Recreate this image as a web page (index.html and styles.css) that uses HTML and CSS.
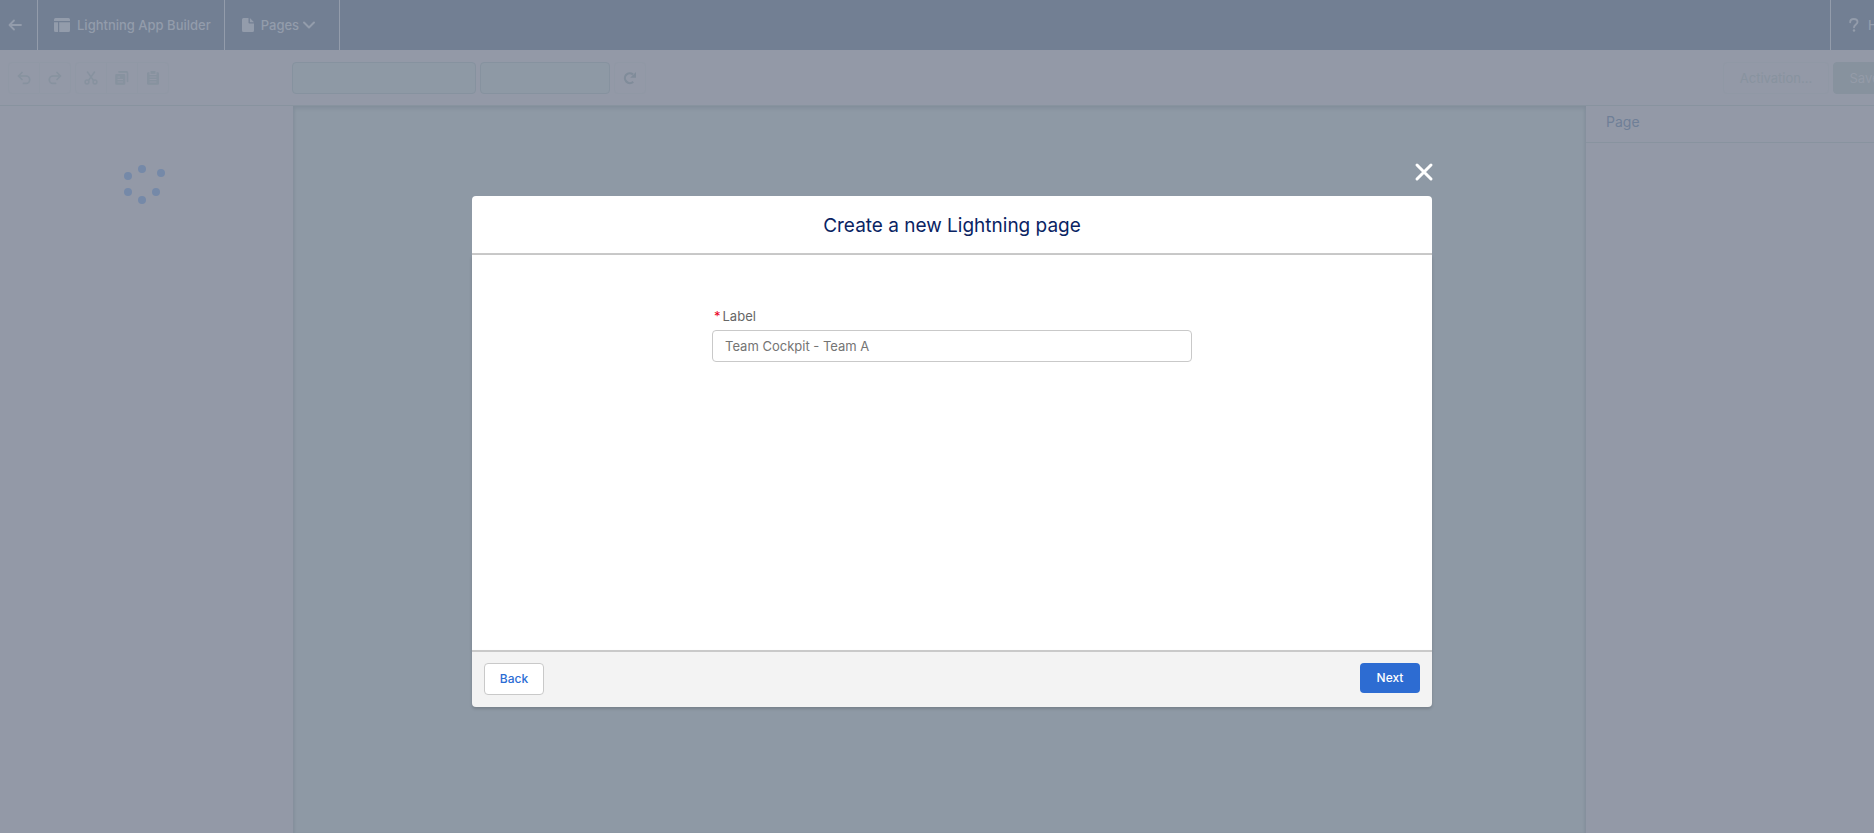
FILE: index.html
```html
<!DOCTYPE html>
<html lang="en">
<head>
  <meta charset="UTF-8">
  <meta name="viewport" content="width=device-width, initial-scale=1.0">
  <title>Lightning App Builder</title>
  <link rel="stylesheet" href="styles.css">
</head>
<body>
  <div class="app">
    <!-- Top navigation -->
    <header class="nav">
      <a class="nav-item nav-back" href="#" aria-label="Back">
        <svg width="14" height="12" viewBox="0 0 14 12"><path d="M13 6H2M6 1.500L1.500 6L6 10.500" fill="none" stroke="currentColor" stroke-width="1.800" stroke-linecap="round" stroke-linejoin="round"/></svg>
      </a>
      <div class="nav-item nav-brand">
        <svg width="16" height="14" viewBox="0 0 16 14" fill="currentColor"><path d="M1.500 0h13A1.500 1.500 0 0 1 16 1.500V3H0V1.500A1.500 1.500 0 0 1 1.500 0zM0 4.200h4V14H1.500A1.500 1.500 0 0 1 0 12.500zM5.200 4.200H16v8.300a1.500 1.500 0 0 1-1.500 1.500H5.200z"/></svg>
        <span>Lightning App Builder</span>
      </div>
      <button class="nav-item nav-pages" type="button">
        <svg width="12" height="14" viewBox="0 0 12 14" fill="currentColor"><path d="M1.500 0H6.500v4.500a1 1 0 0 0 1 1H12v7a1.500 1.500 0 0 1-1.500 1.500h-9A1.500 1.500 0 0 1 0 12.500v-11A1.500 1.500 0 0 1 1.500 0zM7.900 0L12 4.200H7.900z"/></svg>
        <span>Pages</span>
        <svg class="chevron" width="12" height="8" viewBox="0 0 12 8"><path d="M1 1.500L6 6.500L11 1.500" fill="none" stroke="currentColor" stroke-width="2" stroke-linecap="round" stroke-linejoin="round"/></svg>
      </button>
      <a class="nav-item nav-help" href="#">
        <svg width="10" height="14" viewBox="0 0 10 14"><path d="M1.200 4.200C1.200 2.300 2.800 1 4.800 1s3.700 1.200 3.700 3.100C8.500 6.300 5 6.600 5 9.300" fill="none" stroke="currentColor" stroke-width="1.900" stroke-linecap="round"/><circle cx="5" cy="12.500" r="1.200" fill="currentColor"/></svg>
        <span>Help</span>
      </a>
    </header>

    <!-- Toolbar -->
    <div class="toolbar">
      <div class="tools">
        <div class="btn-group">
          <button type="button" disabled aria-label="Undo">
            <svg width="14" height="14" viewBox="0 0 14 14"><path d="M1.500 5H9a3.700 3.700 0 0 1 0 7.400H6.500M5 1.500L1.500 5L5 8.500" fill="none" stroke="currentColor" stroke-width="1.700" stroke-linecap="round" stroke-linejoin="round"/></svg>
          </button>
          <button type="button" disabled aria-label="Redo">
            <svg width="14" height="14" viewBox="0 0 14 14"><path d="M12.500 5H5a3.700 3.700 0 0 0 0 7.400H7.500M9 1.500L12.500 5L9 8.500" fill="none" stroke="currentColor" stroke-width="1.700" stroke-linecap="round" stroke-linejoin="round"/></svg>
          </button>
        </div>
        <div class="btn-group">
          <button type="button" disabled aria-label="Cut">
            <svg width="14" height="14" viewBox="0 0 14 14" fill="none" stroke="currentColor" stroke-width="1.500" stroke-linecap="round"><path d="M3.500 1L9.500 9.500M10.500 1L4.500 9.500"/><circle cx="3" cy="11" r="1.900"/><circle cx="11" cy="11" r="1.900"/></svg>
          </button>
          <button type="button" disabled aria-label="Copy">
            <svg width="14" height="14" viewBox="0 0 14 14" fill="currentColor"><path fill-rule="evenodd" d="M1.500 3h7.500A1.300 1.300 0 0 1 10.300 4.300v8.200A1.300 1.300 0 0 1 9 13.800H1.500A1.300 1.300 0 0 1 .2 12.500V4.300A1.300 1.300 0 0 1 1.500 3zM2.500 5.500v1H5v-1zM2.500 8v1H8V8zM2.500 10.500v1H8v-1z"/><path d="M4 .9h7.500a1 1 0 0 1 1 1v8.500" fill="none" stroke="currentColor" stroke-width="1.600" stroke-linecap="round"/></svg>
          </button>
          <button type="button" disabled aria-label="Paste">
            <svg width="14" height="14" viewBox="0 0 14 14" fill="currentColor"><path d="M4.500 0h5v2.800h-5z"/><path fill-rule="evenodd" d="M2.300 1.300H3.500V4h7V1.300h1.200A1.300 1.300 0 0 1 13 2.600v9.900a1.300 1.300 0 0 1-1.300 1.300H2.300A1.300 1.300 0 0 1 1 12.500V2.600a1.300 1.300 0 0 1 1.300-1.300zM3.500 5.500v1h7v-1zM3.500 8v1h7V8zM3.500 10.500v1h7v-1z"/></svg>
          </button>
        </div>
      </div>
      <div class="view-options">
        <select class="device-select" disabled aria-label="Device"></select>
        <select class="zoom-select" disabled aria-label="Zoom"></select>
        <button class="refresh" type="button" aria-label="Refresh">
          <svg width="14" height="14" viewBox="0 0 14 14"><path d="M10.200 10.700A4.900 4.900 0 1 1 10 3.400" fill="none" stroke="currentColor" stroke-width="2.200"/><path d="M13 1v5.700H7.200z" fill="currentColor"/></svg>
        </button>
      </div>
      <div class="page-actions">
        <button class="activation" type="button" disabled>Activation...</button>
        <button class="save" type="button" disabled>Save</button>
      </div>
    </div>

    <!-- Workspace -->
    <main class="workspace">
      <aside class="components">
        <svg class="spinner" width="46" height="44" viewBox="0 0 46 44" fill="currentColor" role="img" aria-label="Loading">
          <circle cx="22" cy="7" r="4"/>
          <circle cx="41" cy="11" r="4"/>
          <circle cx="8" cy="14" r="4"/>
          <circle cx="8" cy="30" r="4"/>
          <circle cx="36" cy="30" r="4"/>
          <circle cx="22" cy="38" r="4"/>
        </svg>
      </aside>
      <section class="canvas"></section>
      <aside class="properties">
        <h2>Page</h2>
      </aside>
    </main>

    <!-- New page dialog -->
    <div class="overlay">
      <form class="modal" role="dialog" aria-labelledby="modalTitle">
        <button class="modal-close" type="button" aria-label="Close">
          <svg width="18" height="18" viewBox="0 0 18 18"><path d="M3 2L17 16M17 2L3 16" stroke="currentColor" stroke-width="3" stroke-linecap="round"/></svg>
        </button>
        <div class="modal-header">
          <h1 id="modalTitle">Create a new Lightning page</h1>
        </div>
        <div class="modal-content">
          <div class="field">
            <label for="pageLabel"><abbr title="required">*</abbr>Label</label>
            <input type="text" id="pageLabel" value="Team Cockpit - Team A" required>
          </div>
        </div>
        <div class="modal-footer">
          <button class="btn-back" type="button">Back</button>
          <button class="btn-next" type="submit">Next</button>
        </div>
      </form>
    </div>
  </div>
</body>
</html>
```

FILE: styles.css
```css
* {
  box-sizing: border-box;
}

body {
  margin: 0;
  overflow: hidden;
  font-family: Inter, sans-serif;
  font-size: 13px;
  line-height: 20px;
  color: #6f7f97;
}

button,
input,
select {
  font: inherit;
  color: inherit;
  margin: 0;
}

svg {
  display: block;
  flex: none;
  overflow: visible;
}

/* The builder runs a little past the right edge of the window */
.app {
  display: flex;
  flex-direction: column;
  width: calc(100% + 30px);
  height: 100vh;
  background: #9399a7;
}

/* Navigation */
.nav {
  display: flex;
  height: 50px;
  background: #727f93;
  color: #939cab;
  font-weight: 500;
}

.nav-item {
  display: flex;
  align-items: center;
  border: 0;
  border-right: 1px solid #939cab;
  background: none;
  color: inherit;
  text-decoration: none;
}

.nav-back {
  padding: 0 15px 0 8px;
}

.nav-brand {
  gap: 7px;
  padding: 0 13px 0 16px;
}

.nav-pages {
  gap: 7px;
  padding: 0 24px 0 17px;
}

.nav-pages .chevron {
  margin-left: -3px;
}

.nav-help {
  gap: 9px;
  width: 74px;
  margin-left: auto;
  padding-left: 18px;
  border-right: 0;
  border-left: 1px solid #939cab;
}

/* Toolbar */
.toolbar {
  display: flex;
  align-items: center;
  height: 56px;
  padding: 0 8px;
  border-bottom: 1px solid #88939f;
}

.toolbar button {
  display: flex;
  align-items: center;
  justify-content: center;
  height: 32px;
  padding: 0;
  border: 1px solid #9098a5;
  border-radius: 4px;
  background: none;
}

.tools {
  display: flex;
  gap: 4px;
  width: 284px;
}

.btn-group {
  display: flex;
}

.toolbar .btn-group button {
  width: 32px;
  color: #87929f;
  border-radius: 0;
}

.btn-group button + button {
  margin-left: -1px;
}

.toolbar .btn-group button:first-child {
  border-radius: 4px 0 0 4px;
}

.toolbar .btn-group button:last-child {
  border-radius: 0 4px 4px 0;
}

.view-options,
.page-actions {
  display: flex;
  gap: 4px;
}

.view-options select {
  height: 32px;
  appearance: none;
  border: 1px solid #86929f;
  border-radius: 4px;
  background: #8e99a5;
  opacity: 1;
}

.device-select {
  width: 184px;
}

.zoom-select {
  width: 130px;
}

.toolbar .refresh {
  width: 32px;
  color: #808c9a;
}

.page-actions {
  margin-left: auto;
}

.toolbar .activation {
  width: 106px;
  color: #88939f;
}

.toolbar .save {
  width: 63px;
  border-color: #87929e;
  background: #87929e;
  color: #949ba8;
}

/* Workspace */
.workspace {
  display: flex;
  flex: 1;
}

.components {
  width: 293px;
  padding: 56px 120px;
}

.spinner {
  color: #7589a8;
}

.canvas {
  flex: 1;
  background: #8e99a5;
  box-shadow: inset 0 5px 4px -3px #818c99, inset 3px 0 2px -1px #86919e, inset -3px 0 2px -1px #86919e;
}

.properties {
  width: 318px;
}

.properties h2 {
  margin: 0;
  padding: 6px 20px 10px;
  border-bottom: 1px solid #88939f;
  font-size: 14px;
  font-weight: 400;
}

/* Dialog */
.overlay {
  position: absolute;
  top: 0;
  left: 0;
  display: flex;
  align-items: center;
  justify-content: center;
  width: calc(100% + 30px);
  height: 100vh;
}

.modal {
  display: flex;
  flex-direction: column;
  width: 70%;
  max-width: 960px;
  margin-top: 36px;
}

.modal-close {
  align-self: flex-end;
  margin-bottom: 15px;
  padding: 0;
  border: 0;
  background: none;
  color: #fff;
}

.modal-header {
  padding: 17px 16px 15px;
  border-bottom: 2px solid #c9c9c9;
  border-radius: 4px 4px 0 0;
  background: #fff;
  text-align: center;
}

.modal-header h1 {
  margin: 0;
  color: #0a2463;
  font-size: 19px;
  line-height: 25px;
  font-weight: 400;
}

.modal-content {
  min-height: 395px;
  padding: 51px 16px;
  background: #fff;
  box-shadow: 0 2px 3px rgba(0, 0, 0, 0.16);
}

.field {
  width: 480px;
  max-width: 100%;
  margin: 0 auto;
}

.field label {
  display: block;
  padding: 0 2px 4px;
  color: #666;
}

.field abbr {
  margin-right: 2px;
  color: #ea001e;
  text-decoration: none;
}

.field input {
  display: block;
  width: 100%;
  height: 32px;
  padding: 0 12px;
  border: 1px solid #c9c9c9;
  border-radius: 4px;
  background: #fff;
  color: #747474;
}

.modal-footer {
  display: flex;
  align-items: flex-start;
  justify-content: space-between;
  padding: 11px 12px 12px;
  border-top: 2px solid #c9c9c9;
  border-radius: 0 0 4px 4px;
  background: #f3f3f3;
  box-shadow: 0 2px 3px rgba(0, 0, 0, 0.16);
}

.modal-footer button {
  width: 60px;
  padding: 0;
  border-radius: 4px;
  font-size: 12px;
  font-weight: 500;
}

.btn-back {
  height: 32px;
  border: 1px solid #c9c9c9;
  background: #fff;
  color: #2b6cd4;
}

.btn-next {
  height: 30px;
  border: 0;
  background: #2d6cd2;
  color: #fff;
}
```
